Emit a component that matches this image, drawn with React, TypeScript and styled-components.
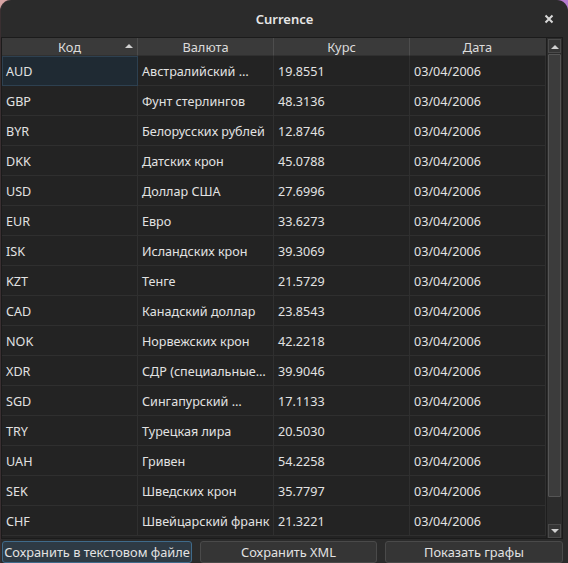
import React from "react";
import styled, { createGlobalStyle } from "styled-components";

const Global = createGlobalStyle`
  html, body { margin: 0; padding: 0; }
  body {
    width: 568px; height: 563px; overflow: hidden;
    background: linear-gradient(90deg, #d6a3a3 0%, #c79ab8 60%, #b67ad0 100%);
    font-family: "Noto Sans", "Open Sans", sans-serif;
  }
`;

const Window = styled.div`
  width: 568px;
  height: 563px;
  box-sizing: border-box;
  background: #2b2b2b;
  border-radius: 11px 11px 0 0;
  border-left: 1px solid #3a2f31;
  display: flex;
  flex-direction: column;
`;

const TitleBar = styled.div`
  height: 37px;
  flex: none;
  position: relative;
  display: flex;
  align-items: center;
  justify-content: center;
  color: #e6e6e6;
  font-size: 13px;
  font-weight: 600;
`;

const Close = styled.div`
  position: absolute;
  right: 14px;
  top: 14px;
  width: 10px;
  height: 10px;
  display: flex;
`;

const Body = styled.div`
  flex: 1;
  display: flex;
  flex-direction: column;
  padding: 0 5px 2px 0;
  gap: 2px;
`;

const Table = styled.div`
  height: 500px;
  flex: none;
  border: 1px solid #1b1b1b;
  background: #232323;
  display: grid;
  grid-template-columns: 544px 16px;
`;

const Grid = styled.div`
  display: grid;
  grid-template-columns: repeat(4, 136px);
  grid-auto-rows: 30px;
  grid-template-rows: 18px;
  align-content: start;
`;

const HeadCell = styled.div<{ $last?: boolean }>`
  height: 18px;
  box-sizing: border-box;
  background: #3a3a3a;
  border-right: 1px solid ${(p) => (p.$last ? "#3a3a3a" : "#4d4d4d")};
  border-bottom: 1px solid #303030;
  color: #dcdcdc;
  font-size: 12.8px;
  padding-top: 2px;
  display: flex;
  align-items: center;
  justify-content: center;
  position: relative;
  line-height: 1;
`;

const SortArrow = styled.div`
  position: absolute;
  right: 4px;
  top: 6px;
  width: 0;
  height: 0;
  border-left: 4px solid transparent;
  border-right: 4px solid transparent;
  border-bottom: 4px solid #d0d0d0;
`;

const Cell = styled.div<{ $selected?: boolean }>`
  box-sizing: border-box;
  border-right: 1px solid #2f2f2f;
  border-bottom: 1px solid #2f2f2f;
  background: ${(p) => (p.$selected ? "#1f2a33" : "transparent")};
  outline: ${(p) => (p.$selected ? "1px solid #2d4050" : "none")};
  outline-offset: -1px;
  color: #e2e2e2;
  font-size: 12.6px;
  padding: 1px 4px 0 4px;
  display: flex;
  align-items: center;
  white-space: nowrap;
  overflow: hidden;
`;

const ScrollBar = styled.div`
  display: flex;
  flex-direction: column;
  background: #2c2c2c;
  border-left: 1px solid #1e1e1e;
  padding: 1px 1px 0 1px;
  gap: 1px;
`;

const ArrowBtn = styled.div`
  height: 14px;
  flex: none;
  box-sizing: border-box;
  border: 1px solid #4a4a4a;
  background: #353535;
  display: flex;
  align-items: center;
  justify-content: center;
`;

const Track = styled.div`
  flex: 1;
  display: flex;
  flex-direction: column;
`;

const Handle = styled.div`
  height: 443px;
  box-sizing: border-box;
  border: 1px solid #555;
  border-radius: 1px;
  background: #3c3c3c;
`;

const Buttons = styled.div`
  display: grid;
  grid-template-columns: 190px 177px 178px;
  column-gap: 8px;
  padding-left: 1px;
`;

const Button = styled.div<{ $focused?: boolean }>`
  height: 22px;
  box-sizing: border-box;
  border-radius: 3px;
  border: 1px solid ${(p) => (p.$focused ? "#3f6a8a" : "#4a4a4a")};
  background: ${(p) => (p.$focused ? "#2e3a44" : "#353535")};
  color: #e2e2e2;
  font-size: 12.8px;
  display: flex;
  align-items: center;
  justify-content: center;
  white-space: nowrap;
`;

const rows: [string, string, string][] = [
  ["AUD", "Австралийский …", "19.8551"],
  ["GBP", "Фунт стерлингов", "48.3136"],
  ["BYR", "Белорусских рублей", "12.8746"],
  ["DKK", "Датских крон", "45.0788"],
  ["USD", "Доллар США", "27.6996"],
  ["EUR", "Евро", "33.6273"],
  ["ISK", "Исландских крон", "39.3069"],
  ["KZT", "Тенге", "21.5729"],
  ["CAD", "Канадский доллар", "23.8543"],
  ["NOK", "Норвежских крон", "42.2218"],
  ["XDR", "СДР (специальные…", "39.9046"],
  ["SGD", "Сингапурский …", "17.1133"],
  ["TRY", "Турецкая лира", "20.5030"],
  ["UAH", "Гривен", "54.2258"],
  ["SEK", "Шведских крон", "35.7797"],
  ["CHF", "Швейцарский франк", "21.3221"],
];

export default function App() {
  return (
    <>
      <Global />
      <Window>
        <TitleBar>
          Currence
          <Close>
            <svg width="10" height="10" viewBox="0 0 10 10">
              <path d="M1.5 1.5 L8.5 8.5 M8.5 1.5 L1.5 8.5" stroke="#d8d8d8" strokeWidth="2" />
            </svg>
          </Close>
        </TitleBar>
        <Body>
          <Table>
            <Grid>
              <HeadCell>
                Код
                <SortArrow />
              </HeadCell>
              <HeadCell>Валюта</HeadCell>
              <HeadCell>Курс</HeadCell>
              <HeadCell $last>Дата</HeadCell>
              {rows.map(([code, name, rate], i) => (
                <React.Fragment key={code}>
                  <Cell $selected={i === 0}>{code}</Cell>
                  <Cell>{name}</Cell>
                  <Cell>{rate}</Cell>
                  <Cell>03/04/2006</Cell>
                </React.Fragment>
              ))}
            </Grid>
            <ScrollBar>
              <ArrowBtn>
                <svg width="8" height="5" viewBox="0 0 8 5">
                  <path d="M0 5 L4 1 L8 5 Z" fill="#d0d0d0" />
                </svg>
              </ArrowBtn>
              <Track>
                <Handle />
              </Track>
              <ArrowBtn>
                <svg width="8" height="5" viewBox="0 0 8 5">
                  <path d="M0 0 L4 4 L8 0 Z" fill="#d0d0d0" />
                </svg>
              </ArrowBtn>
            </ScrollBar>
          </Table>
          <Buttons>
            <Button $focused>Сохранить в текстовом файле</Button>
            <Button>Сохранить XML</Button>
            <Button>Показать графы</Button>
          </Buttons>
        </Body>
      </Window>
    </>
  );
}
